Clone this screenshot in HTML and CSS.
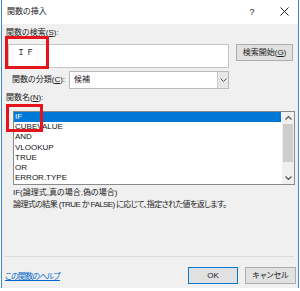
FILE: index.html
```html
<!DOCTYPE html>
<html lang="ja">
<head>
<meta charset="utf-8">
<title>関数の挿入</title>
<link rel="stylesheet" href="styles.css">
</head>
<body>
<div class="dialog">
  <div class="titlebar">
    <span class="title">関数の挿入</span>
    <span class="help">?</span>
    <span class="close"><svg width="9" height="9" viewBox="0 0 9 9"><path d="M0.5 0.5L8.5 8.5M8.5 0.5L0.5 8.5" stroke="#222" stroke-width="1"/></svg></span>
  </div>
  <div class="content">
    <div class="label l-search">関数の検索(<u>S</u>):</div>
    <div class="row search-row">
      <div class="input">ＩＦ</div>
      <div class="btn btn-search">検索開始(<u>G</u>)</div>
    </div>
    <div class="row cat-row">
      <div class="label l-cat">関数の分類(<u>C</u>):</div>
      <div class="select">
        <span class="select-text">候補</span>
        <span class="select-arrow"><svg width="7" height="4" viewBox="0 0 7 4"><path d="M0.5 0.5L3.5 3.5L6.5 0.5" fill="none" stroke="#555" stroke-width="1"/></svg></span>
      </div>
    </div>
    <div class="label l-name">関数名(<u>N</u>):</div>
    <div class="listbox">
      <div class="items">
        <div class="item selected">IF</div>
        <div class="item">CUBEVALUE</div>
        <div class="item">AND</div>
        <div class="item">VLOOKUP</div>
        <div class="item">TRUE</div>
        <div class="item">OR</div>
        <div class="item">ERROR.TYPE</div>
      </div>
      <div class="scrollbar">
        <span class="arrow"><svg width="7" height="4" viewBox="0 0 7 4"><path d="M0.5 3.5L3.5 0.5L6.5 3.5" fill="none" stroke="#555" stroke-width="1.2"/></svg></span>
        <span class="thumb"></span>
        <span class="track"></span>
        <span class="arrow"><svg width="7" height="4" viewBox="0 0 7 4"><path d="M0.5 0.5L3.5 3.5L6.5 0.5" fill="none" stroke="#555" stroke-width="1.2"/></svg></span>
      </div>
    </div>
    <div class="sig">IF(論理式,真の場合,偽の場合)</div>
    <div class="desc">論理式の結果 (TRUE か FALSE) に応じて、指定された値を返します。</div>
    <div class="sep"></div>
    <div class="footer">
      <a class="helplink" href="#">この関数のヘルプ</a>
      <div class="btn btn-ok">OK</div>
      <div class="btn btn-cancel">キャンセル</div>
    </div>
  </div>
  <div class="redbox red1"></div>
  <div class="redbox red2"></div>
</div>
</body>
</html>
```
FILE: styles.css
```css
* { box-sizing: border-box; }
html, body { margin: 0; padding: 0; background: #ffffff; }
body {
  width: 300px;
  height: 291px;
  overflow: hidden;
  font-family: "Liberation Sans", "Noto Sans CJK JP", sans-serif;
  font-size: 8px;
  color: #1a1a1a;
  font-feature-settings: "palt";
}
u { text-decoration: underline; }
.dialog {
  position: relative;
  margin-left: 1px;
  width: 298px;
  height: 288px;
  border-left: 1px solid #3d87d9;
  border-right: 1px solid #3d87d9;
  background: #f0f0f0;
}
.titlebar {
  height: 24px;
  background: #ffffff;
  display: flex;
  align-items: center;
}
.title {
  margin-left: 5px;
  font-size: 8px;
  line-height: 12px;
  color: #222;
  flex: 1;
}
.help {
  width: 30px;
  text-align: center;
  font-size: 9px;
  color: #222;
  margin-top: -1px;
}
.close {
  width: 28px;
  margin-left: 3px;
  display: flex;
  justify-content: center;
  margin-top: -1px;
}
.content {
  display: flex;
  flex-direction: column;
}
.label { line-height: 12px; white-space: nowrap; }
.l-search { margin-top: 3px; margin-left: 4px; }
.row { display: flex; align-items: flex-start; }
.search-row { margin-top: 5px; }
.input {
  margin-left: 6px;
  width: 221px;
  height: 24px;
  background: #fff;
  border: 1px solid #c4c4c4;
  padding: 2px 0 0 8px;
  line-height: 12px;
  font-size: 8px;
  letter-spacing: 1px;
  font-feature-settings: normal;
}
.btn {
  height: 17px;
  background: #e1e1e1;
  border: 1px solid #adadad;
  display: flex;
  align-items: center;
  justify-content: center;
  line-height: 12px;
  white-space: nowrap;
}
.btn-search { margin-left: 7px; width: 57px; }
.cat-row { margin-top: 3px; align-items: center; }
.l-cat { margin-left: 10px; width: 57px; }
.select {
  width: 160px;
  height: 18px;
  background: #fff;
  border: 1px solid #b9b9b9;
  display: flex;
  align-items: stretch;
}
.select-text { flex: 1; padding-left: 4px; line-height: 16px; }
.select-arrow {
  width: 11px;
  background: #e8e8e8;
  border-left: 1px solid #c9c9c9;
  display: flex;
  align-items: center;
  justify-content: center;
}
.l-name { margin-top: 3px; margin-left: 4px; }
.listbox {
  margin-top: 7px;
  margin-left: 11px;
  width: 282px;
  height: 74px;
  background: #fff;
  border: 1px solid #8a8a8a;
  display: flex;
}
.items { flex: 1; padding-top: 0; }
.item {
  height: 10.2px;
  line-height: 10.2px;
  padding-left: 1px;
  white-space: nowrap;
  color: #111;
}
.item.selected {
  background: #0078d7;
  color: #fff;
  margin-right: 1px;
}
.scrollbar {
  width: 12px;
  background: #f0f0f0;
  display: flex;
  flex-direction: column;
  align-items: center;
}
.arrow {
  height: 12px;
  display: flex;
  align-items: center;
  justify-content: center;
}
.thumb {
  width: 10px;
  height: 38px;
  background: #cdcdcd;
}
.track { flex: 1; }
.sig { margin-top: 2px; margin-left: 11px; line-height: 12px; white-space: nowrap; }
.desc { margin-left: 11px; line-height: 12px; white-space: nowrap; letter-spacing: -0.6px; }
.sep {
  margin-top: 45px;
  margin-left: 3px;
  width: 289px;
  height: 1px;
  background: #dcdcdc;
}
.footer {
  display: flex;
  align-items: center;
  padding-top: 10px;
}
.helplink {
  margin-left: 3px;
  color: #0066cc;
  text-decoration: underline;
  line-height: 12px;
  margin-top: 2px;
  flex: 1;
  white-space: nowrap;
  letter-spacing: -0.8px;
}
.btn-ok { width: 50px; border-color: #0078d7; }
.btn-cancel { width: 51px; margin-left: 7px; margin-right: 2px; }
.redbox {
  position: absolute;
  border: 3px solid #e8141c;
}
.red1 { left: 3px; top: 36px; width: 44px; height: 33px; }
.red2 { left: 4px; top: 104px; width: 37px; height: 28px; }
```
